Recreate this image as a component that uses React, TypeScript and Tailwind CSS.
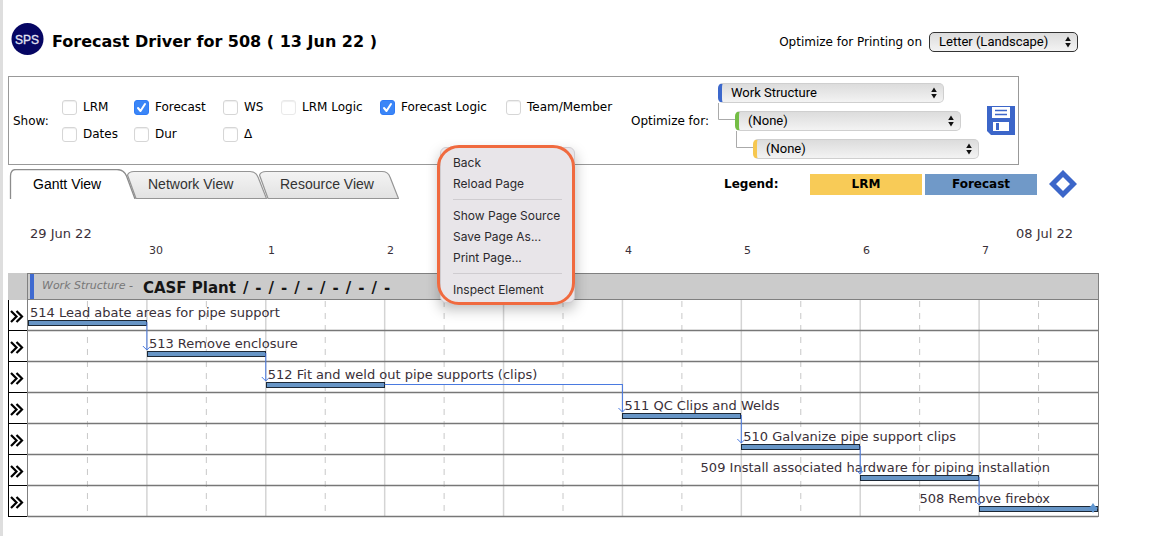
import React from "react";

type Task = {
  id: number;
  name: string;
  start: number; // day column, 0 = 29 Jun
  link?: number; // day column where the successor starts
  alignRight?: boolean;
};

const tasks: Task[] = [
  { id: 514, name: "Lead abate areas for pipe support", start: 0, link: 1 },
  { id: 513, name: "Remove enclosure", start: 1, link: 2 },
  { id: 512, name: "Fit and weld out pipe supports (clips)", start: 2, link: 5 },
  { id: 511, name: "QC Clips and Welds", start: 5, link: 6 },
  { id: 510, name: "Galvanize pipe support clips", start: 6, link: 7 },
  { id: 509, name: "Install associated hardware for piping installation", start: 7, link: 8, alignRight: true },
  { id: 508, name: "Remove firebox", start: 8, alignRight: true },
];

const days = ["", "30", "1", "2", "", "4", "5", "6", "7"];
const groupPath = ["CASF Plant", "/", "-", "/", "-", "/", "-", "/", "-", "/", "-", "/", "-"];
const ROW = 31;

const pct = (day: number) => `${(day / 9) * 100}%`;

const SelectArrows = () => (
  <svg className="pointer-events-none absolute right-[7px] top-1/2 -translate-y-1/2" width="6" height="12" viewBox="0 0 6 12">
    <path d="M3 0.5 L5.8 5 H0.2 Z M3 11.5 L5.8 7 H0.2 Z" fill="#111" />
  </svg>
);

const selectBase =
  "h-5 w-full appearance-none rounded-[5px] border bg-linear-to-b from-[#dcdcdc] to-[#f3f3f3] font-[Roboto,sans-serif] text-[13px] leading-[18px] text-black";

type CheckProps = { label: string; checked?: boolean; disabled?: boolean };

const Check: React.FC<CheckProps> = ({ label, checked, disabled }) => (
  <label className="flex h-[27px] items-center gap-[6px] whitespace-nowrap">
    <span className="relative flex size-[15px]">
      <input
        type="checkbox"
        defaultChecked={checked}
        disabled={disabled}
        className="peer size-[15px] appearance-none rounded-[3px] border border-[#d6d6d6] bg-white shadow-[inset_0_1px_1px_#eeeeee] checked:border-[#2f7bf6] checked:bg-[#3b86f7] checked:shadow-none disabled:border-[#e9e9e9]"
      />
      <svg className="pointer-events-none absolute inset-0 hidden peer-checked:block" viewBox="0 0 15 15">
        <path d="M4 8 L6.5 11 L11 4" fill="none" stroke="#fff" strokeWidth="2" strokeLinecap="round" strokeLinejoin="round" />
      </svg>
    </span>
    {label}
  </label>
);

const Tab: React.FC<{ label: string; active?: boolean; order: string }> = ({ label, active, order }) => (
  <button role="tab" aria-selected={!!active} className={`relative h-[30px] w-[140px] text-left ${order}`}>
    <svg className="absolute inset-0" width="140" height="30" viewBox="0 0 140 30">
      <defs>
        <linearGradient id="tabFill" x1="0" y1="0" x2="0" y2="1">
          <stop offset="0" stopColor="#f4f4f4" />
          <stop offset="1" stopColor="#e2e2e2" />
        </linearGradient>
      </defs>
      {active ? (
        <path d="M14.5 30 V7 Q14.5 0.5 20 0.5 H121 Q128 0.5 130.5 7 L139 30" fill="#fff" stroke="#8c8c8c" strokeWidth="1.3" />
      ) : (
        <path d="M9 29.5 L0.5 6 Q2 2.5 7 2.5 H123 Q129 2.5 131 8 L139.5 29.5 Z" fill="url(#tabFill)" stroke="#959595" strokeWidth="1.2" />
      )}
    </svg>
    <span className={active ? "relative pl-[37px] text-black" : "relative pl-[21px] text-[#333]"}>{label}</span>
  </button>
);

const GroupSelect: React.FC<{ label: string; value: string; accent: string; indent: string }> = ({
  label,
  value,
  accent,
  indent,
}) => (
  <div className={`relative h-5 w-[226px] ${indent}`}>
    <select aria-label={label} className={`${selectBase} border-[#cfcfcf] border-l-4 pl-[9px] ${accent}`}>
      <option>{value}</option>
      <option>Team</option>
    </select>
    <SelectArrows />
  </div>
);

const GanttLines = () => (
  <svg className="pointer-events-none absolute inset-0 h-full w-full overflow-visible">
    {days.map((_, i) => (
      <g key={i}>
        {i > 0 && <line x1={pct(i)} x2={pct(i)} y1="0" y2="100%" stroke="#d4d4d4" strokeWidth="1.5" />}
        <line x1={pct(i + 0.5)} x2={pct(i + 0.5)} y1="1" y2="100%" stroke="#c8c8c8" strokeDasharray="6 6" />
      </g>
    ))}
    {tasks.map((_, i) => (
      <line key={i} x1="0" x2="100%" y1={(i + 1) * ROW - 0.5} y2={(i + 1) * ROW - 0.5} stroke="#777" strokeWidth="1.3" />
    ))}
  </svg>
);

const Connectors = () => (
  <svg className="pointer-events-none absolute inset-0 h-full w-full overflow-visible">
    {tasks.map((t, i) => {
      if (t.link === undefined) return null;
      const y = i * ROW + 22;
      return (
        <g key={t.id} stroke="#4a7ae0" fill="none">
          <line x1={pct(t.start + 1)} x2={pct(t.link)} y1={y + 0.5} y2={y + 0.5} />
          <line x1={pct(t.link)} x2={pct(t.link)} y1={y} y2={y + 28} />
          <svg x={pct(t.link)} y={y + 28} overflow="visible">
            <path d="M-4 -4 L0 0 L3 -3" />
          </svg>
        </g>
      );
    })}
    {/* milestone at the end of the last bar */}
    <svg x="100%" y={6 * ROW + 22} overflow="visible">
      <path d="M-5 -5 L-3 -2 L0 0 L-3 2 L-5 5 L-7 2 L-10 0 L-7 -2 Z" fill="#5f95cf" />
    </svg>
  </svg>
);

const menuItem = "block h-[21px] w-full text-left";

const ContextMenu = () => (
  <div className="absolute left-[434px] top-[145px] z-20 h-[160px] w-[138px] font-[Inter,sans-serif] text-[12px] leading-[21px] text-[#2b292d]">
    <div className="absolute inset-y-[2px] left-[3px] right-0 rounded-md border border-[#cfccd0] bg-[#e8e5e9] shadow-[0_6px_14px_rgba(0,0,0,0.28)]" />
    <div className="relative h-full rounded-[22px] border-[3px] border-[#f06a3f] pl-[13px] pr-[10px] pt-1">
      <button className={menuItem}>Back</button>
      <button className={menuItem}>Reload Page</button>
      <hr className="my-[5px] border-[#cfccd0]" />
      <button className={`${menuItem} whitespace-nowrap`}>Show Page Source</button>
      <button className={menuItem}>Save Page As...</button>
      <button className={menuItem}>Print Page...</button>
      <hr className="my-[5px] border-[#cfccd0]" />
      <button className={menuItem}>Inspect Element</button>
    </div>
  </div>
);

export default function App() {
  return (
    <div className="relative min-h-screen border-l-[3px] border-[#dedede] bg-white pl-[5px] font-['DejaVu_Sans',sans-serif] text-[12px] text-black">
      <header className="mr-[92px] flex h-[76px] items-start justify-between pl-[3px] pt-[22px]">
        <div className="flex gap-2">
          <svg width="33" height="34" viewBox="0 0 33 34" aria-label="SPS">
            <circle cx="16.5" cy="17" r="16" fill="#060663" />
            <text x="16" y="21.5" textAnchor="middle" fontFamily="Liberation Sans" fontSize="12" fill="#e4e4f4" stroke="#e4e4f4" strokeWidth="0.3">
              SPS
            </text>
          </svg>
          <h1 className="whitespace-nowrap text-[16px] font-bold leading-10">Forecast Driver for 508 ( 13 Jun 22 )</h1>
        </div>
        <label className="flex h-10 items-center gap-[7px] whitespace-nowrap">
          Optimize for Printing on
          <span className="relative w-[149px]">
            <select className={`${selectBase} border-[#333] pl-[9px]`}>
              <option>Letter (Landscape)</option>
              <option>Tabloid (Landscape)</option>
            </select>
            <SelectArrows />
          </span>
        </label>
      </header>

      <section className="mr-[151px] flex h-[89px] items-center border border-[#999] pl-1">
        <span className="w-[49px]">Show:</span>
        <div className="grid grid-cols-[72px_89px_58px_99px_126px_125px]">
          <Check label="LRM" />
          <Check label="Forecast" checked />
          <Check label="WS" />
          <Check label="LRM Logic" disabled />
          <Check label="Forecast Logic" checked />
          <Check label="Team/Member" />
          <Check label="Dates" />
          <Check label="Dur" />
          <Check label="Δ" />
        </div>
        <span className="w-[87px] whitespace-nowrap">Optimize for:</span>
        <div className="relative flex w-[261px] flex-col gap-2">
          <svg className="absolute left-0 top-5" width="36" height="48" viewBox="0 0 36 48" fill="none" stroke="#aaa">
            <path d="M0.5 0 V16.5 H18 M18.5 28 V44.5 H36" />
          </svg>
          <GroupSelect label="Group by, first level" value="Work Structure" accent="border-l-[#3c68cc]" indent="" />
          <GroupSelect label="Group by, second level" value="(None)" accent="border-l-[#74bd45]" indent="ml-[17px]" />
          <GroupSelect label="Group by, third level" value="(None)" accent="border-l-[#f6c750]" indent="ml-[35px]" />
        </div>
        <button aria-label="Save" className="ml-2">
          <svg width="28" height="29" viewBox="0 0 28 29">
            <path d="M0 0 H28 V29 H4 L0 25 Z" fill="#3c66c9" />
            <path d="M5 1 H23 V12 H5 Z M6 16 H22 V25 H6 Z" fill="#fff" />
            <path d="M8 4.5 H20 M8 8.5 H20" stroke="#3c66c9" strokeWidth="1.3" />
            <path d="M9 17 H12 V24 H9 Z" fill="#3c66c9" />
          </svg>
        </button>
      </section>

      <div className="mr-[93px] mt-1 flex h-[30px] justify-between">
        <div role="tablist" className="-ml-3 flex font-['Liberation_Sans',sans-serif] text-[14px]">
          <Tab label="Gantt View" active order="z-10" />
          <Tab label="Network View" order="-ml-[9px] z-5" />
          <Tab label="Resource View" order="-ml-2" />
        </div>
        <div className="flex items-center text-[12px] font-bold">
          <span className="w-[86px]">Legend:</span>
          <span className="mr-[3px] h-[21px] w-28 bg-[#f8cb57] text-center leading-[21px]">LRM</span>
          <span className="mr-3 h-[21px] w-28 bg-[#7099c8] text-center leading-[21px]">Forecast</span>
          <svg width="28" height="28" viewBox="0 0 28 28">
            <path d="M14 3.5 L24.5 14 L14 24.5 L3.5 14 Z" fill="#fff" stroke="#3c66c9" strokeWidth="5" />
          </svg>
        </div>
      </div>

      <main className="mr-[71px] mt-[25px]">
        <div className="ml-[22px] mr-[26px] flex justify-between text-[13px] leading-5 text-[#3a3038]">
          <span>29 Jun 22</span>
          <span>08 Jul 22</span>
        </div>
        <div className="ml-5 grid h-[29px] grid-cols-9 text-[11px] leading-[14px] text-[#3a3038]">
          {days.map((d, i) => (
            <span key={i} className="pl-[2px]">
              {d}
            </span>
          ))}
        </div>

        <div className="flex h-[27px] bg-[#cbcbcb]">
          <div className="w-[19px]" />
          <div className="flex flex-1 items-center whitespace-nowrap border border-[#808080]">
            <span className="ml-[2px] mr-2 h-full w-1 bg-[#3f6ad0]" />
            <i className="text-[11px] text-[#777]">Work Structure -</i>
            <b className="ml-[10px] flex gap-[7px] pt-[3px] text-[15px] text-[#151515]">
              {groupPath.map((part, i) => (
                <span key={i}>{part}</span>
              ))}
            </b>
          </div>
        </div>

        <div className="flex">
          <div className="w-[19px] border-l border-black">
            {tasks.map((t) => (
              <button key={t.id} aria-label={`Open ${t.id}`} className="block h-[31px] w-full border-b border-black">
                <svg width="15" height="30" viewBox="0 0 15 30">
                  <path d="M2 11 L7.5 16.5 L2 22 M7.5 11 L13 16.5 L7.5 22" fill="none" stroke="#000" strokeWidth="2.2" />
                </svg>
              </button>
            ))}
          </div>
          <div className="relative flex-1 border-x border-[#808080]">
            <GanttLines />
            <div className="relative">
              {tasks.map((t) => (
                <div key={t.id} className="h-[31px]">
                  <div
                    className={`h-5 whitespace-nowrap pt-1 text-[13px] leading-[18px] text-[#3a3038] ${t.alignRight ? "pr-12 text-right" : "pl-[2px]"}`}
                    style={t.alignRight ? undefined : { marginLeft: pct(t.start) }}
                  >
                    {t.id} {t.name}
                  </div>
                  <div
                    className="h-[6px] border border-[#1c2836] bg-[#6795c6]"
                    style={{ marginLeft: pct(t.start), width: pct(1) }}
                  />
                </div>
              ))}
            </div>
            <Connectors />
          </div>
        </div>
      </main>

      <ContextMenu />
    </div>
  );
}
